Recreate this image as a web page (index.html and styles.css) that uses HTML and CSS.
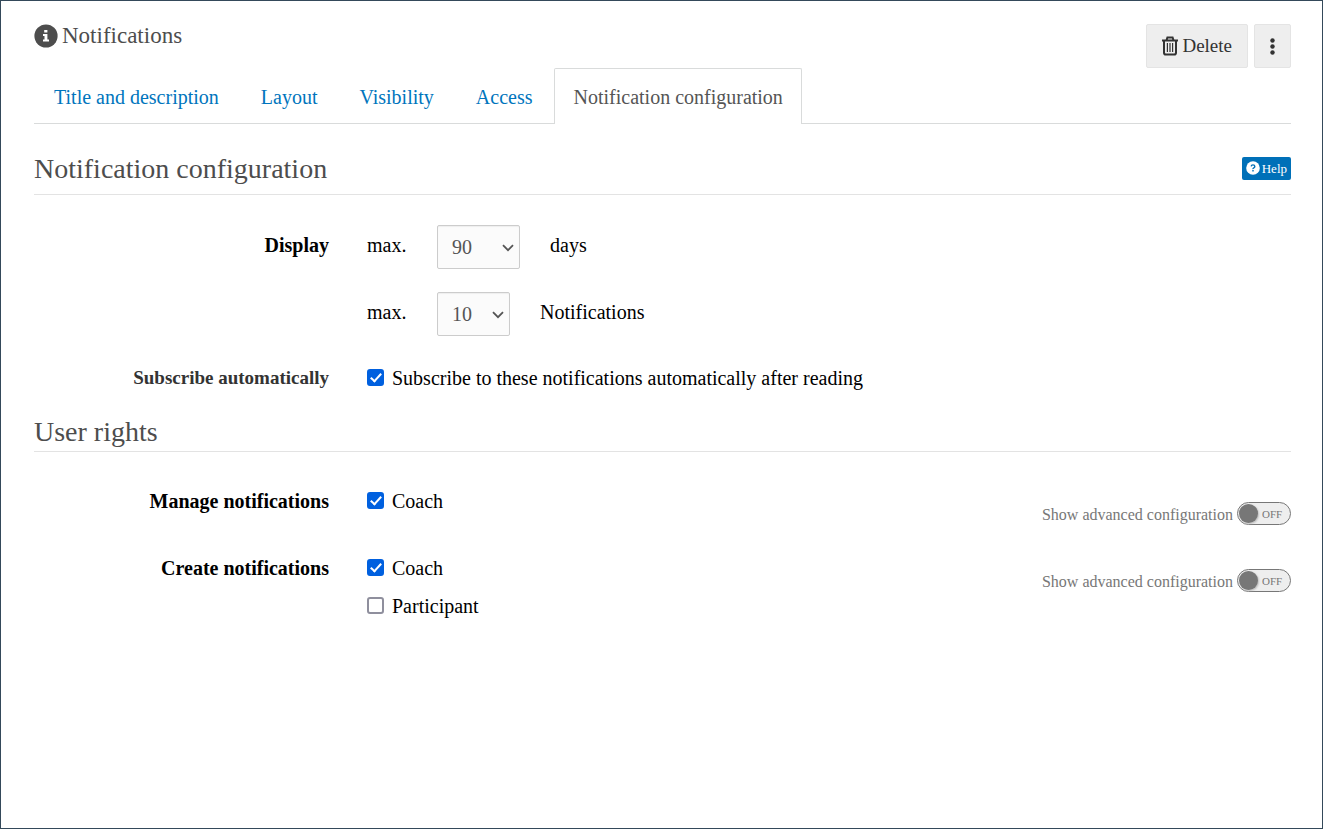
FILE: index.html
```html
<!DOCTYPE html>
<html lang="en">
<head>
<meta charset="utf-8">
<meta name="viewport" content="width=device-width, initial-scale=1">
<title>Notifications</title>
<link rel="stylesheet" href="styles.css">
</head>
<body>
<main class="page">
  <header class="page-header">
    <h1 class="page-title">
      <svg class="title-icon" viewBox="0 0 24 24" aria-hidden="true"><circle cx="12" cy="12" r="11.6" fill="currentColor"/><path fill="#fff" d="M10.2 6h3.2v2.6h-3.2zM9 10h4.4v5.4H15v2.1H9v-2.1h1.5v-3.3H9z"/></svg>
      Notifications
    </h1>
    <div class="actions">
      <button class="btn" type="button">
        <svg class="trash-icon" viewBox="0 0 16 20" aria-hidden="true" fill="none" stroke="currentColor"><path stroke-width="2" d="M0 4.5h16M4.5 4.2L5.400 1.500h5.200l.9 2.700M2 4.500v12.200q0 1.800 1.800 1.800h8.400q1.800 0 1.800-1.800V4.500"/><path stroke-width="1.2" d="M5.400 7v9M8 7v9M10.600 7v9"/></svg>
        Delete
      </button>
      <button class="btn btn-menu" type="button" aria-label="More actions">
        <svg class="dots-icon" viewBox="0 0 5 17" aria-hidden="true" fill="currentColor"><circle cx="2.5" cy="2.5" r="2.2"/><circle cx="2.5" cy="8.5" r="2.2"/><circle cx="2.5" cy="14.5" r="2.2"/></svg>
      </button>
    </div>
  </header>

  <nav class="tabs">
    <a class="tab" href="#title">Title and description</a>
    <a class="tab" href="#layout">Layout</a>
    <a class="tab" href="#visibility">Visibility</a>
    <a class="tab" href="#access">Access</a>
    <a class="tab tab-active" href="#configuration" aria-current="page">Notification configuration</a>
  </nav>

  <form class="settings">
    <section>
      <div class="section-head">
        <h2 class="section-title">Notification configuration</h2>
        <a class="help" href="#help">
          <svg class="help-icon" viewBox="0 0 14 14" aria-hidden="true"><circle cx="7" cy="7" r="6.8" fill="#fff"/><path fill="none" stroke="#0070b8" stroke-width="1.4" d="M5.2 5.4Q5.3 3.9 7 3.9T8.8 5.4Q8.8 6.3 7.8 6.8T7 8.2M7 9.1v1.5"/></svg>
          Help
        </a>
      </div>
      <div class="rows">
        <div class="row">
          <span class="row-label row-label-tall">Display</span>
          <div class="row-body limits">
            <div class="limit">
              <label class="limit-prefix" for="days">max.</label>
              <span class="select-wrap">
                <select class="select select-days" id="days"><option>90</option></select>
                <svg class="caret" viewBox="0 0 12 8" aria-hidden="true"><path d="M1 1.200L6 6.200l5-5" fill="none" stroke="currentColor" stroke-width="1.800"/></svg>
              </span>
              <span>days</span>
            </div>
            <div class="limit">
              <label class="limit-prefix" for="count">max.</label>
              <span class="select-wrap">
                <select class="select select-count" id="count"><option>10</option></select>
                <svg class="caret" viewBox="0 0 12 8" aria-hidden="true"><path d="M1 1.200L6 6.200l5-5" fill="none" stroke="currentColor" stroke-width="1.800"/></svg>
              </span>
              <span>Notifications</span>
            </div>
          </div>
        </div>
        <div class="row">
          <span class="row-label row-label-soft">Subscribe automatically</span>
          <div class="row-body">
            <label class="check"><input class="checkbox" type="checkbox" checked>Subscribe to these notifications automatically after reading</label>
          </div>
        </div>
      </div>
    </section>

    <section>
      <div class="section-head section-head-rights">
        <h2 class="section-title">User rights</h2>
      </div>
      <div class="rows rows-rights">
        <div class="row">
          <span class="row-label">Manage notifications</span>
          <div class="row-body">
            <label class="check"><input class="checkbox" type="checkbox" checked>Coach</label>
          </div>
          <label class="advanced">Show advanced configuration
            <span class="toggle"><input class="toggle-input" type="checkbox" role="switch"><span class="toggle-text">OFF</span></span>
          </label>
        </div>
        <div class="row">
          <span class="row-label">Create notifications</span>
          <div class="row-body">
            <label class="check"><input class="checkbox" type="checkbox" checked>Coach</label>
            <label class="check"><input class="checkbox" type="checkbox">Participant</label>
          </div>
          <label class="advanced">Show advanced configuration
            <span class="toggle"><input class="toggle-input" type="checkbox" role="switch"><span class="toggle-text">OFF</span></span>
          </label>
        </div>
      </div>
    </section>
  </form>
</main>
</body>
</html>
```
FILE: styles.css
```css
*,
*::before,
*::after {
  box-sizing: border-box;
}

body {
  margin: 0;
  font-family: "Liberation Serif", serif;
  font-size: 20px;
  line-height: 28px;
  color: #000;
  background: #fff;
}

.page {
  min-height: 100vh;
  padding: 23px 31px 24px 33px;
  border: 1px solid #34495a;
}

.page-header {
  display: flex;
  justify-content: space-between;
  align-items: flex-start;
}

.page-title {
  display: flex;
  align-items: center;
  gap: 4px;
  margin: 0;
  font-size: 23px;
  font-weight: 400;
  line-height: 24px;
  color: #4d4d4d;
}

.title-icon {
  width: 24px;
  height: 24px;
}

.actions {
  display: flex;
  gap: 6px;
}

.btn {
  display: flex;
  align-items: center;
  justify-content: center;
  gap: 4px;
  height: 44px;
  padding: 0 15px;
  border: 1px solid #e4e4e4;
  border-radius: 2px;
  background: #eee;
  color: #333;
  font: 19px "Liberation Serif", serif;
}

.btn-menu {
  width: 37px;
  padding: 0;
}

.trash-icon {
  width: 16px;
  height: 20px;
}

.dots-icon {
  width: 5px;
  height: 17px;
}

.tabs {
  display: flex;
  gap: 2px;
  border-bottom: 1px solid #d9dbdb;
}

.tab {
  margin-bottom: -1px;
  padding: 14px 19px 13px;
  border: 1px solid transparent;
  border-bottom: 0;
  border-radius: 2px 2px 0 0;
  color: #0075bd;
  text-decoration: none;
}

.tab-active {
  padding: 14px 18px 13px;
  border-color: #d9dbdb;
  background: #fff;
  color: #555;
}

.section-head {
  display: flex;
  justify-content: space-between;
  align-items: center;
  margin-top: 24px;
  padding-bottom: 4px;
  border-bottom: 1px solid #e3e3e3;
}

.section-head-rights {
  margin-top: 21px;
  padding: 0;
}

.section-title {
  margin: 0;
  font-size: 28px;
  font-weight: 400;
  line-height: 42px;
  color: #4d4d4d;
}

.section-head-rights .section-title {
  line-height: 38px;
}

.help {
  display: flex;
  align-items: center;
  gap: 2px;
  margin-bottom: 2px;
  padding: 0 4px;
  border-radius: 2px;
  background: #0070b8;
  color: #fff;
  font-size: 13px;
  line-height: 23px;
  text-decoration: none;
}

.help-icon {
  width: 14px;
  height: 14px;
}

.rows {
  display: grid;
  gap: 28px;
  padding-top: 30px;
}

.rows-rights {
  gap: 1px;
  padding-top: 35px;
}

.rows-rights .row {
  min-height: 66px;
}

.row {
  display: grid;
  grid-template-columns: 295px 1fr auto;
  column-gap: 38px;
  align-items: start;
}

.row-label {
  text-align: right;
  font-weight: 700;
}

.row-label-tall {
  line-height: 40px;
}

.row-label-soft {
  font-size: 19px;
  color: #333;
}

.row-body {
  display: grid;
  gap: 10px;
}

.limits {
  gap: 23px;
}

.limit {
  display: flex;
  align-items: flex-start;
  gap: 30px;
  line-height: 40px;
}

.limit-prefix {
  width: 40px;
}

.select-wrap {
  position: relative;
  display: flex;
}

.select {
  appearance: none;
  height: 44px;
  padding: 0 14px;
  border: 1px solid #ccc;
  border-radius: 2px;
  background: #fbfbfb;
  box-shadow: inset 0 1px 1px #eee;
  color: #555;
  font: 20px "Liberation Serif", serif;
}

.select-days {
  width: 83px;
}

.select-count {
  width: 73px;
}

.caret {
  position: absolute;
  top: 19px;
  right: 6px;
  width: 12px;
  height: 8px;
  color: #555;
  pointer-events: none;
}

.check {
  display: flex;
  align-items: center;
  gap: 8px;
}

.checkbox {
  appearance: none;
  display: grid;
  place-items: center;
  flex: none;
  width: 17px;
  height: 17px;
  margin: 0 0 2px;
  border: 2px solid #8f8f9d;
  border-radius: 3px;
  background: #fff;
}

.checkbox:checked {
  border-color: #0060df;
  background: #0060df;
}

.checkbox:checked::before {
  content: "";
  width: 6px;
  height: 11px;
  margin-bottom: 3px;
  border: solid #fff;
  border-width: 0 2px 2px 0;
  transform: rotate(42deg);
}

.advanced {
  display: flex;
  align-items: flex-start;
  gap: 4px;
  padding-top: 15px;
  font-size: 16px;
  line-height: 26px;
  color: #777;
}

.toggle {
  display: flex;
  align-items: center;
  gap: 2px;
  width: 54px;
  height: 23px;
  padding: 0 1px;
  border: 1px solid #777;
  border-radius: 12px;
  background: #eee;
}

.toggle-input {
  appearance: none;
  width: 19px;
  height: 19px;
  margin: 0;
  border-radius: 50%;
  background: #777;
  box-shadow: 1px 1px 2px #bbb;
}

.toggle-text {
  padding-left: 2px;
  font-size: 11px;
  line-height: 20px;
}
```
